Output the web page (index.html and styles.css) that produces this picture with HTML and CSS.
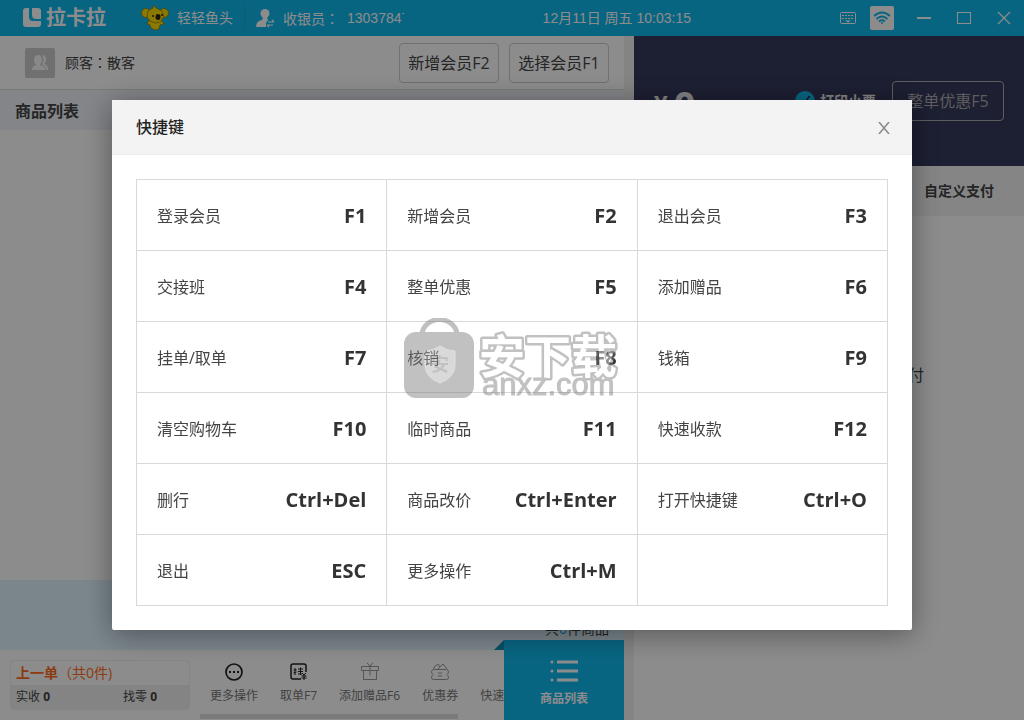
FILE: index.html
```html
<!DOCTYPE html>
<html lang="zh-CN">
<head>
<meta charset="utf-8">
<meta name="viewport" content="width=device-width, initial-scale=1">
<title>快捷键</title>
<link rel="stylesheet" href="styles.css">
</head>
<body>
<div class="app">
  <header class="topbar">
    <div class="brand">
      <svg class="brand-mark" viewBox="0 0 20 20" width="20" height="20" fill="currentColor"><path d="M4 0h3v9q0 4 4 4h8v3q0 3-3 3H4q-3 0-3-3V3q0-3 3-3z"/><path d="M10 0h6q3 0 3 3v8h-5q-4 0-4-4z"/></svg>
      <span class="brand-name">拉卡拉</span>
    </div>
    <div class="shop">
      <svg viewBox="0 0 28 26" width="28" height="26"><g fill="#ffdc05" stroke="#8e7608" stroke-width=".7"><path d="M9 14l-3 5 3 1 1 3 4 2 4-1 1-4 4-1-2-3-3-2z"/><circle cx="5" cy="8" r="4.500"/><circle cx="23" cy="8" r="4.500"/><path d="M7 6l5-3 1-3 2 3 6 3 2 6-4 5-5 1-5-2-3-4z"/></g><ellipse cx="17" cy="12" rx="2.500" ry="3" fill="#30260a"/><circle cx="12" cy="11" r="1" fill="#30260a"/><circle cx="21" cy="10" r="1" fill="#30260a"/></svg>
      <span>轻轻鱼头</span>
    </div>
    <div class="cashier">
      <svg viewBox="0 0 20 20" width="20" height="20" fill="currentColor"><circle cx="10" cy="5.500" r="4.500"/><path d="M8 9h4l1 3-2 3v4H1q0-6 6-7z"/><path d="M13 14h6M12 17h6M17 12l2 2M14 19l-2-2" stroke="currentColor" stroke-width="1.200" fill="none"/></svg>
      <span>收银员<span class="colon" lang="zh-TW">：</span></span>
      <span class="cashier-id">13037847</span>
    </div>
    <time class="clock">12月11日 周五 10:03:15</time>
    <div class="window-tools">
      <button class="tool" aria-label="键盘"><svg viewBox="0 0 18 14" width="18" height="14" fill="none" stroke="currentColor"><rect x="1.500" y="1.500" width="15" height="11" rx="1"/><path d="M3 4.500h12M3 7.500h12" stroke-dasharray="2 1"/><path d="M6 9.500h6l-3 2z" fill="currentColor" stroke="none"/></svg></button>
      <button class="tool tool-wifi" aria-label="网络"><svg viewBox="0 0 18 14" width="18" height="14" fill="none" stroke="currentColor" stroke-width="1.800"><path d="M1 5q8-7 16 0M3.500 8q5.500-5 11 0M6 10.500q3-2.500 6 0"/><circle cx="9" cy="12" r="1" fill="currentColor" stroke="none"/></svg></button>
      <button class="tool" aria-label="最小化"><svg viewBox="0 0 14 14" width="14" height="14"><path d="M0 7h14" stroke="currentColor" stroke-width="2"/></svg></button>
      <button class="tool" aria-label="最大化"><svg viewBox="0 0 14 14" width="14" height="14"><rect x=".5" y="1.500" width="13" height="11" fill="none" stroke="currentColor"/></svg></button>
      <button class="tool" aria-label="关闭窗口"><svg viewBox="0 0 14 14" width="14" height="14"><path d="M1 1l12 12M13 1L1 13" stroke="currentColor" stroke-width="1.200"/></svg></button>
    </div>
  </header>

  <div class="workspace">
    <main class="sale">
      <div class="customer">
        <span class="avatar"><svg viewBox="0 0 18 18" width="18" height="18" fill="currentColor"><path d="M11 1q5 0 4 6-1 2-2 3 4 1 4 6h-2q-1-4-4-6 3-4 0-9z"/><path d="M7 1q4 0 4 5 0 3-2 4v1q5 1 5 5H1q0-4 4-5v-1Q3 9 3 6q0-5 4-5z"/></svg></span>
        <span class="customer-name">顾客<span class="colon" lang="zh-TW">：</span>散客</span>
        <button class="member-btn">新增会员F2</button>
        <button class="member-btn">选择会员F1</button>
      </div>
      <h2 class="list-title">商品列表</h2>
      <div class="list-body"></div>
      <div class="summary"><span>共<b>0</b>件商品</span></div>
      <div class="bottom">
        <section class="last-order">
          <div class="last-title"><b>上一单</b>（共0件)</div>
          <div class="last-values"><span>实收 <b>0</b></span><span>找零 <b>0</b></span></div>
        </section>
        <nav class="actions">
          <button class="action strong"><svg viewBox="0 0 20 20" width="20" height="20" fill="none" stroke="currentColor"><circle cx="10" cy="10" r="8" stroke-width="1.700"/><path d="M5 10h2M9 10h2M13 10h2" stroke-width="2"/></svg>更多操作</button>
          <button class="action strong"><svg viewBox="0 0 20 20" width="20" height="20" fill="none" stroke="currentColor"><path d="M17 10V4q0-2-2-2H4Q2 2 2 4v11q0 2 2 2h8" stroke-width="1.500"/><path d="M6 6v7M4.500 8h3M4.500 11l3-1M9 7h5M9 9.500h5M9 12h4M11.500 5.500v7M13 11l2 2 2-2M15 13v5M12.500 14h5M12.500 16h5"/></svg>取单F7</button>
          <button class="action"><svg viewBox="0 0 20 20" width="20" height="20" fill="none" stroke="currentColor"><path d="M1.500 4.500h17v4h-17zM3.500 8.500v9h13v-9M10 4.500v9M7 1l3 3 3-3"/></svg>添加赠品F6</button>
          <button class="action"><svg viewBox="0 0 20 20" width="20" height="20" fill="none" stroke="currentColor"><path d="M4.500 7.500h11q3 0 3 2 0 2-1.500 3 1.500 1 1.500 3 0 2-2 2h-13q-2 0-2-2 0-2 1.500-3-1.500-1-1.500-3 0-2 3-2zM4 7V5l4-3 2 3M8 7l5-5 4 5M8 11h4M8 14h4"/></svg>优惠券</button>
          <button class="action">快速收款</button>
        </nav>
        <button class="list-tab"><svg viewBox="0 0 28 24" width="28" height="24" fill="currentColor"><circle cx="2" cy="3" r="1.500"/><circle cx="2" cy="12" r="1.500"/><circle cx="2" cy="21" r="1.500"/><path d="M7 1.500h21v3H7zM7 10.500h21v3H7zM7 19.500h21v3H7z"/></svg>商品列表</button>
      </div>
    </main>

    <aside class="payment">
      <div class="total">
        <div class="amount"><small>¥</small>0</div>
        <label class="print"><input type="checkbox" checked>打印小票</label>
        <button class="discount">整单优惠F5</button>
      </div>
      <div class="pay-tabs"><button class="pay-tab">自定义支付</button></div>
      <div class="pay-body">请选择支付方式进行支付</div>
    </aside>
  </div>
</div>

<div class="overlay">
  <section class="modal" role="dialog" aria-modal="true" aria-labelledby="modal-title">
    <header class="modal-head">
      <h1 id="modal-title">快捷键</h1>
      <button class="modal-close" aria-label="关闭"><svg viewBox="0 0 12 12" width="12" height="12"><path d="M1 0l10 12M11 0L1 12" stroke="currentColor" stroke-width="1.500"/></svg></button>
    </header>
    <div class="modal-body">
      <table class="keys">
        <tr><td><div>登录会员<kbd>F1</kbd></div></td><td><div>新增会员<kbd>F2</kbd></div></td><td><div>退出会员<kbd>F3</kbd></div></td></tr>
        <tr><td><div>交接班<kbd>F4</kbd></div></td><td><div>整单优惠<kbd>F5</kbd></div></td><td><div>添加赠品<kbd>F6</kbd></div></td></tr>
        <tr><td><div>挂单/取单<kbd>F7</kbd></div></td><td><div>核销<kbd>F8</kbd></div></td><td><div>钱箱<kbd>F9</kbd></div></td></tr>
        <tr><td><div>清空购物车<kbd>F10</kbd></div></td><td><div>临时商品<kbd>F11</kbd></div></td><td><div>快速收款<kbd>F12</kbd></div></td></tr>
        <tr><td><div>删行<kbd>Ctrl+Del</kbd></div></td><td><div>商品改价<kbd>Ctrl+Enter</kbd></div></td><td><div>打开快捷键<kbd>Ctrl+O</kbd></div></td></tr>
        <tr><td><div>退出<kbd>ESC</kbd></div></td><td><div>更多操作<kbd>Ctrl+M</kbd></div></td><td></td></tr>
      </table>
    </div>
    <svg class="watermark" viewBox="0 0 220 82" width="220" height="82" aria-hidden="true">
      <path d="M18 17a17 15 0 0 1 35 0" fill="none" stroke="#777" stroke-width="5"/>
      <rect y="14" width="70" height="66" rx="12" fill="#777"/>
      <path d="M36 28q7 5 15 5v14q0 12-15 18-15-6-15-18V33q8 0 15-5z" fill="#aaa" stroke="#bbb"/>
      <text x="36" y="53" text-anchor="middle" class="shield-text">安</text>
      <text x="75" y="55" class="watermark-name">安下载</text>
      <text x="78" y="77" class="watermark-site">anxz.com</text>
    </svg>
  </section>
</div>
</body>
</html>
```
FILE: styles.css
```css
* { box-sizing: border-box; }

body {
  margin: 0;
  font-family: "Open Sans", "Noto Sans CJK SC", sans-serif;
  font-size: 14px;
  line-height: 20px;
  color: #444;
}

button {
  margin: 0;
  padding: 0;
  border: 0;
  background: none;
  color: inherit;
  font: inherit;
}

svg { display: block; flex: none; }

.colon { font-family: "Noto Sans CJK TC", sans-serif; }

.app {
  display: flex;
  flex-direction: column;
  height: 100vh;
  overflow: hidden;
  background: #f0f0f0;
}

/* Top bar */
.topbar {
  display: flex;
  align-items: center;
  flex: none;
  height: 36px;
  padding: 0 8px 0 22px;
  background: #10b8ec;
  color: #fff;
  white-space: nowrap;
}

.brand { display: flex; align-items: center; gap: 4px; width: 119px; }
.brand-name { font-size: 20px; font-weight: 700; }
.shop { display: flex; align-items: center; gap: 8px; width: 104px; padding-right: 10px; border-right: 1px solid #14a9d8; }
.cashier { display: flex; align-items: center; gap: 8px; margin-left: 10px; }
.cashier-id { width: 57px; overflow: hidden; font-family: "Liberation Sans", sans-serif; }
.clock { margin-left: auto; font-family: "Liberation Sans", "Noto Sans CJK SC", sans-serif; }
.window-tools { display: flex; align-items: center; gap: 16px; margin-left: 145px; }
.tool { display: grid; place-items: center; width: 24px; height: 24px; }
.tool-wifi { margin: 0 2px 0 -6px; border-radius: 2px; background: #fff; color: #10b8ec; }

/* Sale column */
.workspace { display: flex; flex: 1; gap: 10px; min-height: 0; }
.sale { display: flex; flex-direction: column; flex: 1; min-width: 0; background: #fff; }

.customer {
  display: flex;
  align-items: center;
  gap: 10px;
  height: 54px;
  padding: 0 15px 0 25px;
  border-bottom: 1px solid #dcdcdc;
}

.avatar { display: grid; place-items: center; width: 30px; height: 30px; border-radius: 2px; background: #ccc; color: #f8f8f8; }
.customer-name { flex: 1; }
.member-btn { width: 100px; height: 40px; border: 1px solid #ccc; border-radius: 4px; font-size: 16px; }
.list-title { height: 40px; margin: 0; padding: 1px 15px 0; background: #f0f2f8; font-size: 16px; line-height: 40px; }
.list-body { flex: 1; }
.summary { display: flex; align-items: flex-end; justify-content: flex-end; height: 70px; padding: 0 15px 11px; background: #e1f5fe; }
.summary b { color: #10b8ec; font-weight: 400; }

.bottom { display: flex; height: 70px; }
.last-order { width: 180px; height: 50px; margin: 10px 0 0 10px; border: 1px solid #f0f0f0; border-radius: 4px; }
.last-title { padding: 2px 5px; color: #ff6b1a; line-height: 20px; }
.last-values { display: flex; padding: 0 5px; background: #f0f0f0; font-size: 12px; line-height: 24px; }
.last-values span { flex: none; width: 107px; }
.last-values span:last-child { width: auto; }

.actions {
  display: flex;
  flex: 1;
  gap: 22px;
  height: 69px;
  min-width: 0;
  margin-left: 10px;
  padding-left: 10px;
  overflow: hidden;
  color: #777;
  font-size: 12px;
  background: linear-gradient(#e0e0e0, #e0e0e0) left bottom / 258px 5px no-repeat;
}

.action { display: flex; flex-direction: column; align-items: center; justify-content: flex-end; flex: none; gap: 4px; padding-bottom: 13px; white-space: nowrap; }
.action svg { color: #999; }
.action.strong svg { color: #222; }

.list-tab {
  position: relative;
  display: flex;
  flex-direction: column;
  align-items: center;
  justify-content: center;
  gap: 6px;
  width: 120px;
  height: 80px;
  margin-top: -10px;
  padding-top: 8px;
  background: #10b8ec;
  color: #fff;
  font-size: 12px;
  font-weight: 700;
}

.list-tab::before {
  content: "";
  position: absolute;
  top: 0;
  left: -10px;
  border-right: 10px solid #0c91ba;
  border-top: 10px solid transparent;
}

/* Payment column */
.payment { display: flex; flex-direction: column; flex: none; width: 390px; background: #fff; }
.total { display: flex; align-items: center; height: 130px; padding: 0 20px; background: #35395d; color: #eee; }
.amount { display: flex; flex: 1; align-items: center; gap: 6px; padding-top: 6px; font-size: 38px; font-weight: 700; }
.amount small { font-size: 24px; }
.print { display: flex; align-items: center; gap: 5px; margin-right: 16px; font-weight: 700; }
.print input { appearance: none; width: 20px; height: 20px; margin: 0; border-radius: 10px; background: #10b8ec; }
.print input::before { content: "✓"; display: block; text-align: center; }
.discount { width: 112px; height: 40px; border: 1px solid #aaa; border-radius: 4px; color: #aaa; font-size: 16px; }
.pay-tabs { display: flex; justify-content: flex-end; padding: 0 30px; background: #f3f3f3; }
.pay-tab { height: 50px; font-weight: 700; }
.pay-body { flex: 1; padding: 149px 100px 0; font-size: 16px; text-align: right; }

/* Shortcut dialog */
.overlay { position: fixed; inset: 0; padding: 100px 24px 24px; background: rgba(0, 0, 0, .45); }
.modal { position: relative; max-width: 800px; margin: 0 auto; border-radius: 2px; background: #fff; box-shadow: 0 4px 30px rgba(0, 0, 0, .4); }
.modal-head { display: flex; align-items: center; justify-content: space-between; height: 55px; padding: 0 22px 0 24px; border-bottom: 1px solid #ececec; background: #f3f3f3; }
.modal-head h1 { margin: 0; color: #222; font-size: 16px; font-weight: 500; }
.modal-close { padding-top: 2px; color: #888; }
.modal-body { padding: 24px; }
.keys { width: 100%; border-collapse: collapse; table-layout: fixed; font-size: 16px; }
.keys td { height: 71px; padding: 2px 20px 0; border: 1px solid #d9d9d9; }
.keys td div { display: flex; align-items: center; justify-content: space-between; }
.keys kbd { color: #333; font-family: inherit; font-size: 20px; font-weight: 700; }

.watermark { position: absolute; top: 218px; left: 292px; opacity: .45; pointer-events: none; }
.watermark-name { fill: #fff; stroke: #777; stroke-width: 5px; stroke-linejoin: round; paint-order: stroke; font-size: 46px; font-weight: 700; }
.watermark-site { fill: #777; stroke: #777; stroke-width: 1px; font-family: "Liberation Sans", sans-serif; font-size: 31px; }
.shield-text { fill: #777; font-size: 18px; font-weight: 700; }
```
